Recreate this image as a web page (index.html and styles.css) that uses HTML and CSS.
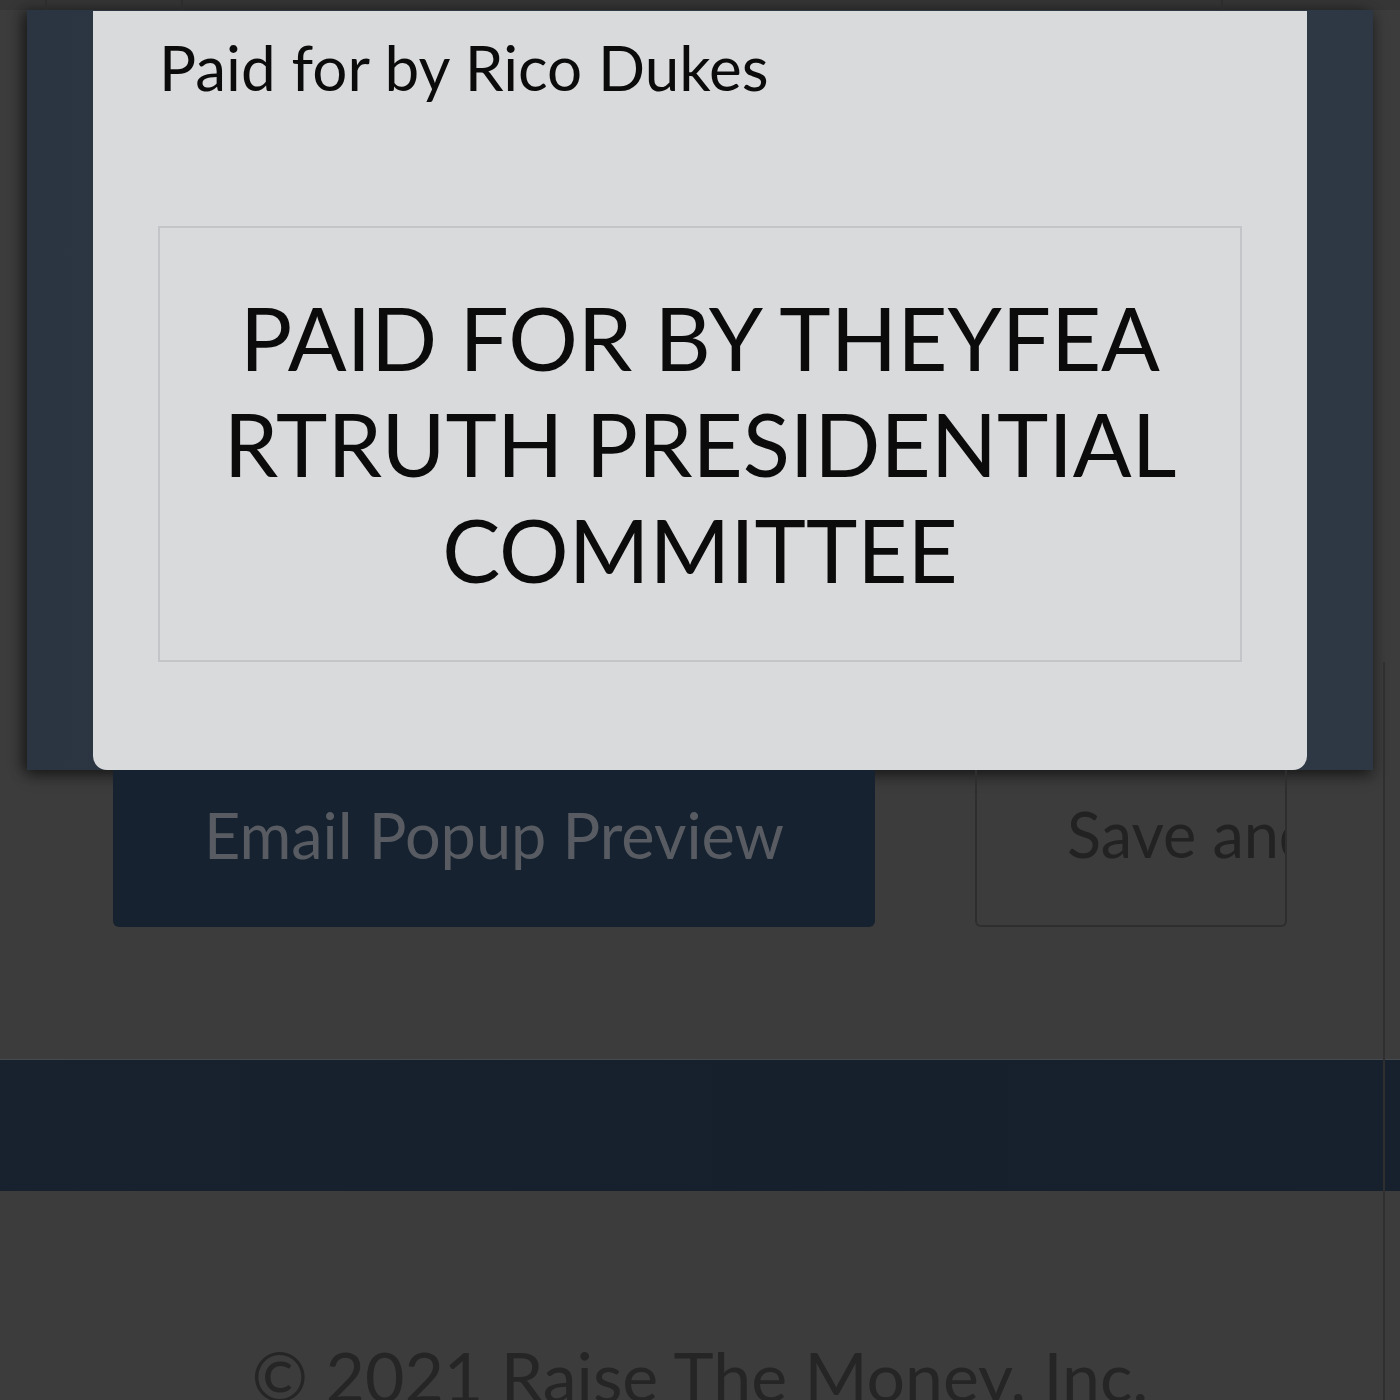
FILE: index.html
```html
<!DOCTYPE html>
<html lang="en">
<head>
<meta charset="utf-8">
<title>Email Popup Preview</title>
<link rel="stylesheet" href="styles.css">
</head>
<body>
<div class="page">
  <div class="top-strip">
    <span class="tick tick-a"></span>
    <span class="tick tick-b"></span>
    <span class="tick tick-c"></span>
  </div>
  <section class="hero">
    <div class="modal">
      <p class="paid-line">Paid for by Rico Dukes</p>
      <div class="disclaimer">
        <p class="disclaimer-text">PAID FOR BY THEYFEA<br>RTRUTH PRESIDENTIAL<br>COMMITTEE</p>
      </div>
    </div>
  </section>
  <div class="actions">
    <button class="btn btn-primary">Email Popup Preview</button>
    <button class="btn btn-outline">Save and Continue</button>
  </div>
  <div class="band"></div>
  <footer class="footer">© 2021 Raise The Money, Inc.</footer>
  <span class="track-line"></span>
</div>
</body>
</html>
```

FILE: styles.css
```css
html, body {
  margin: 0;
  padding: 0;
}
body {
  background: #3c3c3c;
  font-family: Lato, "Open Sans", "Liberation Sans", sans-serif;
  width: 1400px;
  height: 1400px;
  overflow: hidden;
}
.page {
  position: relative;
  width: 1400px;
  height: 1400px;
  overflow: hidden;
}
.top-strip {
  height: 10px;
  display: flex;
  background: #363636;
}
.tick {
  width: 2px;
  height: 10px;
  background: #2c2c2c;
}
.tick-a { margin-left: 45px; }
.tick-b { margin-left: 134px; }
.tick-c { margin-left: 1038px; }
.hero {
  margin: 0 27px;
  height: 760px;
  background: linear-gradient(90deg, #2b3541 0%, #2f3a47 50%, #2e3845 100%);
  box-shadow: 0 6px 14px rgba(0, 0, 0, 0.45), -6px 0 12px rgba(0, 0, 0, 0.35);
  display: flex;
  flex-direction: column;
}
.modal {
  margin: 1px 66px 0;
  flex: 1;
  background: #d9dadc;
  border-radius: 0 0 14px 14px;
  padding: 0 66px;
  display: flex;
  flex-direction: column;
}
.paid-line {
  margin: 20px 0 0;
  font-size: 62px;
  line-height: 72px;
  color: #0b0b0b;
}
.disclaimer {
  margin-top: 123px;
  width: 1080px;
  height: 432px;
  border: 2px solid #c3c5c8;
  display: flex;
  align-items: center;
  justify-content: center;
  box-sizing: content-box;
  margin-left: -1px;
}
.disclaimer-text {
  margin: 0;
  text-align: center;
  font-size: 87px;
  line-height: 106px;
  color: #0b0b0b;
}
.actions {
  display: flex;
  padding-left: 113px;
  gap: 100px;
  height: 157px;
}
.btn {
  font-family: Lato, "Open Sans", "Liberation Sans", sans-serif;
  font-size: 63px;
  height: 157px;
  padding: 0 0 28px;
  white-space: nowrap;
  overflow: hidden;
  box-sizing: border-box;
  cursor: pointer;
}
.btn-primary {
  width: 762px;
  background: #16222f;
  color: #585c62;
  border: none;
  border-radius: 0 0 6px 6px;
}
.btn-outline {
  width: 312px;
  background: transparent;
  color: #222222;
  border: 2px solid #2e2e2e;
  border-top: none;
  border-radius: 0 0 6px 6px;
  text-align: left;
  padding-left: 90px;
}
.band {
  margin-top: 132px;
  height: 131px;
  background: linear-gradient(90deg, #18222e 0%, #16202c 60%, #17212d 100%);
  border-top: 1px solid #454a50;
}
.footer {
  text-align: center;
  margin-top: 145px;
  font-size: 68px;
  line-height: 80px;
  color: #252525;
}
.track-line {
  position: absolute;
  left: 1383px;
  top: 662px;
  width: 2px;
  height: 738px;
  background: #2f2f2f;
}
```
